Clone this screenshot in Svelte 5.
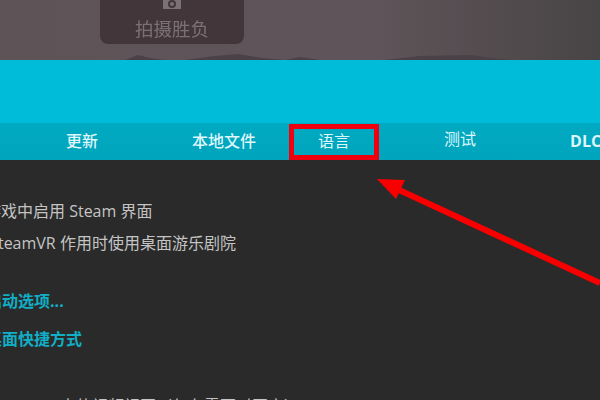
<script lang="ts">
	const tabs = [
		{ label: '更新', cls: 'first' },
		{ label: '本地文件', cls: 'local' },
		{ label: '语言', cls: 'active' },
		{ label: '测试', cls: 'raised' },
		{ label: 'DLC', cls: 'bold' }
	];

	const options = ['在游戏中启用 Steam 界面', '在 SteamVR 作用时使用桌面游乐剧院'];
	const links = ['设置启动选项...', '创建桌面快捷方式'];
</script>

<div class="page">
	<header class="hero">
		<div class="badge">
			<span class="camera"><span class="lens"></span></span>
			<span class="badge-text">拍摄胜负</span>
		</div>
		<svg class="hills" viewBox="0 0 600 8" preserveAspectRatio="none" aria-hidden="true">
			<path d="M125 8L138 3 150 6 165 8ZM185 8L215 4 238 2 262 6 285 8ZM285 8L300 5 320 8ZM385 8L420 4 470 3 500 7 510 8Z" />
		</svg>
	</header>

	<div class="band"></div>

	<nav class="tabs">
		{#each tabs as tab}
			<span class="tab {tab.cls}">{tab.label}</span>
		{/each}
	</nav>

	<main class="body">
		<ul class="options">
			{#each options as option}
				<li>{option}</li>
			{/each}
		</ul>
		<div class="links">
			{#each links as link}
				<span>{link}</span>
			{/each}
		</div>
		<p class="cut">在 SteamVR 中的视频视图（仅在需要时开启）</p>
	</main>

	<svg class="arrow" viewBox="0 0 600 400" aria-hidden="true">
		<path d="M398 189.5L600 283" />
		<polygon points="377,179 405,180 396,199" />
	</svg>
</div>

<style>
	:global(body) {
		margin: 0;
	}

	.page {
		position: relative;
		width: 600px;
		height: 400px;
		overflow: hidden;
		background: #2a2a2a;
		font-family: 'Open Sans', 'Noto Sans CJK SC', sans-serif;
	}

	.hero {
		position: relative;
		height: 60px;
		background: linear-gradient(90deg, #5e5458 0%, #5f5459 62%, #484546 100%);
		overflow: hidden;
	}

	.badge {
		box-sizing: border-box;
		width: 144px;
		height: 44px;
		margin-left: 100px;
		background: #43363b;
		border-radius: 0 0 8px 8px;
		display: flex;
		flex-direction: column;
		align-items: center;
	}

	.camera {
		width: 18px;
		height: 9px;
		background: #7c7276;
		display: flex;
		justify-content: center;
	}

	.lens {
		box-sizing: border-box;
		width: 8px;
		height: 8px;
		border: 2px solid #43363b;
		border-radius: 50%;
	}

	.badge-text {
		margin-top: 9px;
		font-family: 'Noto Sans CJK SC', sans-serif;
		font-size: 18.5px;
		line-height: 20px;
		color: #7b7175;
		filter: blur(0.6px);
	}

	.hills {
		position: absolute;
		left: 0;
		bottom: 0;
		width: 600px;
		height: 8px;
		fill: #4a4149;
	}

	.band {
		height: 63px;
		background: #00bcd8;
	}

	.tabs {
		display: flex;
		height: 37px;
		padding-left: 19px;
		align-items: flex-start;
		white-space: nowrap;
		background: linear-gradient(#00a9c1, #00a5bd);
		color: #dff6fa;
		font-size: 16px;
		font-weight: 500;
	}

	.tab {
		padding: 0 47px;
		line-height: 36px;
	}

	.local {
		padding-right: 15px;
	}

	.active {
		position: relative;
		font-weight: 400;
	}

	.active::after {
		content: '';
		position: absolute;
		left: 18px;
		top: 1px;
		width: 80px;
		height: 26px;
		border: 5px solid #f0000f;
	}

	.raised {
		font-weight: 400;
		margin-top: -2px;
	}

	.bold {
		font-weight: 700;
	}

	.body {
		margin-left: -31px;
		color: #c4c4c4;
		font-size: 16px;
	}

	.options {
		list-style: none;
		margin: 0;
		padding: 35px 0 0 0;
	}

	.options li {
		line-height: 32px;
	}

	.links {
		display: flex;
		flex-direction: column;
		margin: 23px 0 0 -15px;
		color: #11aec6;
		font-weight: 700;
		line-height: 38px;
	}

	.cut {
		margin: 32px 0 0 0;
		white-space: nowrap;
		line-height: 32px;
	}

	.arrow {
		position: absolute;
		inset: 0;
		width: 600px;
		height: 400px;
		pointer-events: none;
	}

	.arrow path {
		stroke: #f80000;
		stroke-width: 6;
		fill: none;
	}

	.arrow polygon {
		fill: #f80000;
	}
</style>
